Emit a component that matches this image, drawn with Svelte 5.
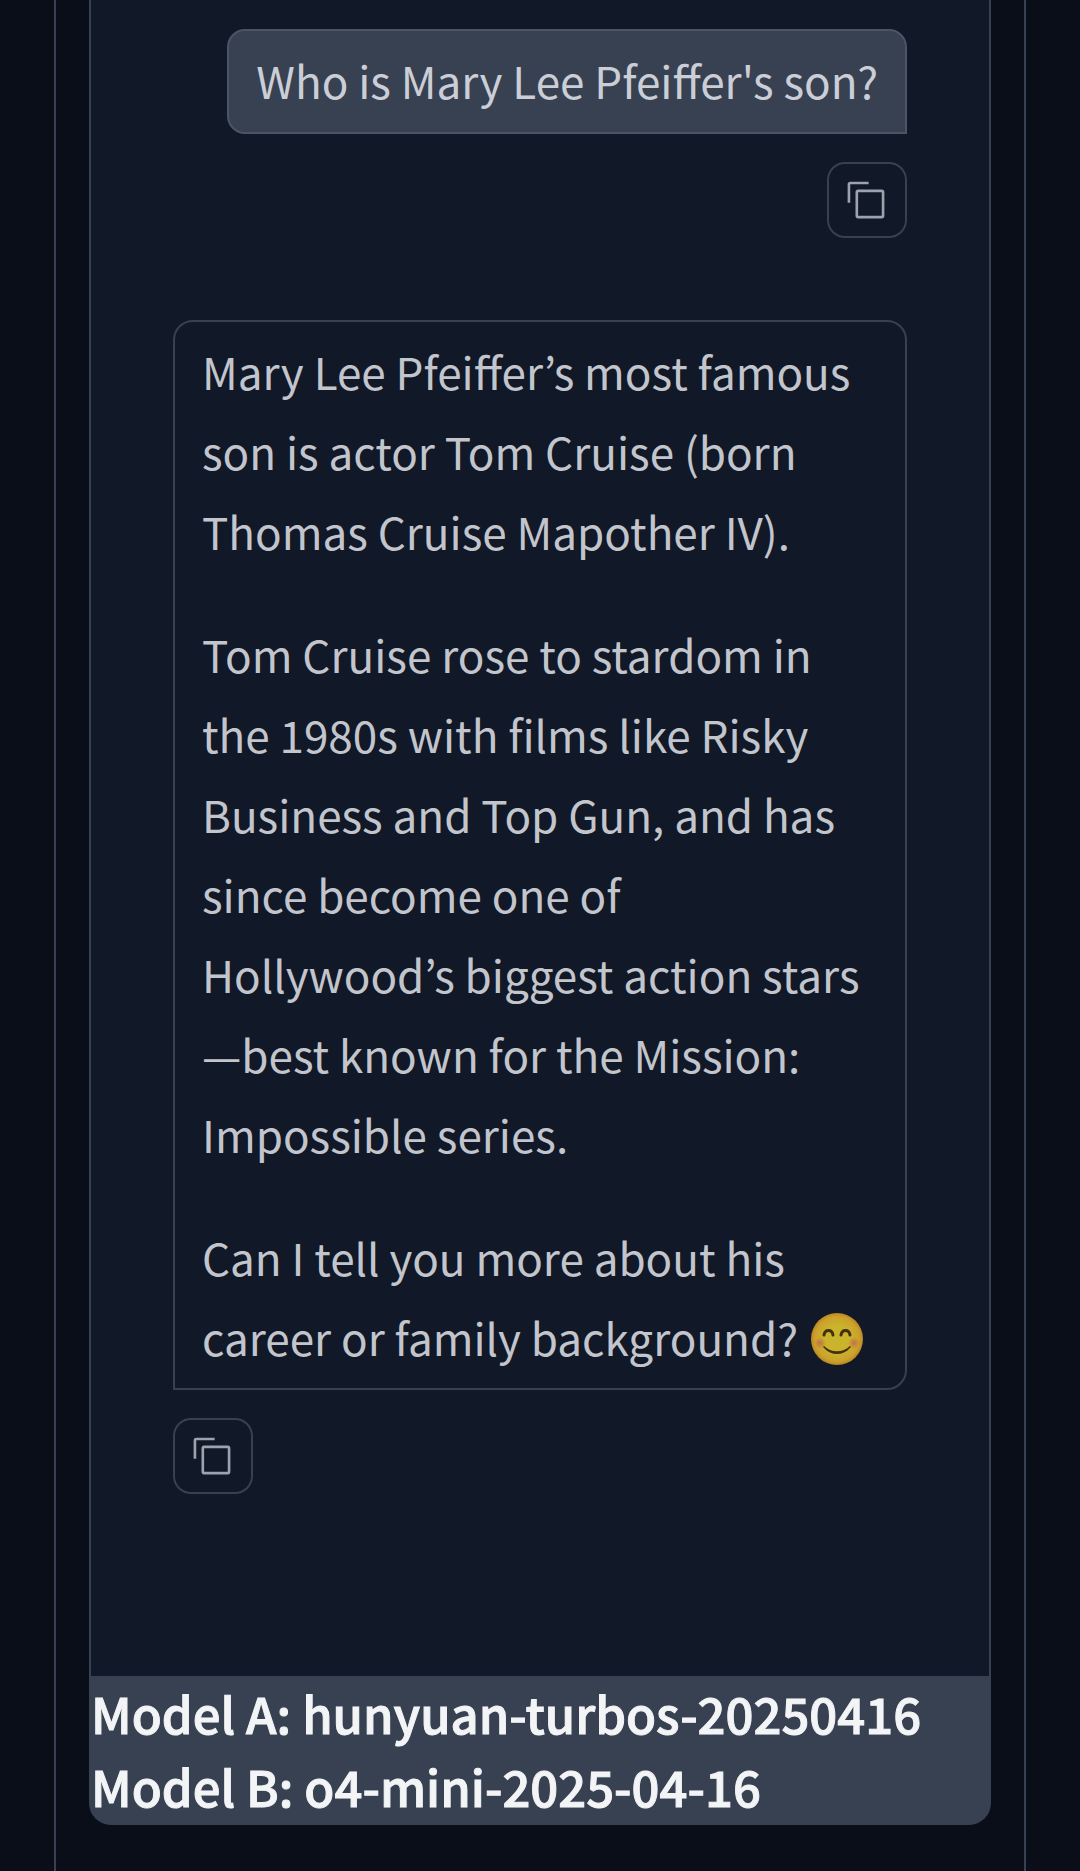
<script lang="ts">
  type Message = {
    role: "user" | "bot"
    paragraphs: string[]
    smile?: boolean
  }

  const messages: Message[] = [
    { role: "user", paragraphs: ["Who is Mary Lee Pfeiffer's son?"] },
    {
      role: "bot",
      paragraphs: [
        "Mary Lee Pfeiffer’s most famous son is actor Tom Cruise (born Thomas Cruise Mapother IV).",
        "Tom Cruise rose to stardom in the 1980s with films like Risky Business and Top Gun, and has since become one of Hollywood’s biggest action stars—best known for the Mission: Impossible series.",
        "Can I tell you more about his career or family background?",
      ],
      smile: true,
    },
  ]

  const models = [
    { label: "Model A", name: "hunyuan-turbos-20250416" },
    { label: "Model B", name: "o4-mini-2025-04-16" },
  ]

  function copy(message: Message) {
    navigator.clipboard?.writeText(message.paragraphs.join("\n\n"))
  }
</script>

<main>
  <div class="frame">
    <section class="chat">
      {#each messages as message}
        <article class="message {message.role}">
          <div class="bubble">
            {#each message.paragraphs as text, i}
              <p>
                {text}
                {#if message.smile && i === message.paragraphs.length - 1}
                  <svg class="smile" viewBox="0 0 54 54" role="img" aria-label="smiling face">
                    <defs>
                      <radialGradient id="face">
                        <stop offset="0.5" stop-color="#c9b42c" />
                        <stop offset="0.85" stop-color="#cba22b" />
                        <stop offset="1" stop-color="#bd8624" />
                      </radialGradient>
                      <radialGradient id="cheek">
                        <stop offset="0" stop-color="#c4704a" />
                        <stop offset="1" stop-color="#c4704a" stop-opacity="0" />
                      </radialGradient>
                    </defs>
                    <circle cx="27" cy="27" r="26" fill="url(#face)" />
                    <circle cx="10" cy="31" r="6" fill="url(#cheek)" />
                    <circle cx="44" cy="31" r="6" fill="url(#cheek)" />
                    <g fill="none" stroke="#44300c" stroke-linecap="round">
                      <path d="M14 23c1-6 8-6 9 0M31 23c1-6 8-6 9 0" stroke-width="3" />
                    </g>
                    <path d="M14 34c7 7 19 7 26 0 1 0 1 1 0 2-7 8-19 8-26 0-1-1-1-2 0-2z" fill="#44300c" />
                  </svg>
                {/if}
              </p>
            {/each}
          </div>
          <button type="button" aria-label="Copy message" onclick={() => copy(message)}>
            <svg viewBox="0 0 32 32" aria-hidden="true">
              <path d="M28 10v18H10V10h18m0-2H10a2 2 0 0 0-2 2v18a2 2 0 0 0 2 2h18a2 2 0 0 0 2-2V10a2 2 0 0 0-2-2Z" />
              <path d="M4 18H2V4a2 2 0 0 1 2-2h14v2H4Z" />
            </svg>
          </button>
        </article>
      {/each}
    </section>
    <footer>
      {#each models as model}
        <h3>{model.label}: {model.name}</h3>
      {/each}
    </footer>
  </div>
</main>

<style>
  :global(body) {
    background: #0a0e18;
  }

  main {
    padding: 0 54px;
    font-family: "Noto Sans CJK KR", "Noto Sans", sans-serif;
  }

  .frame {
    padding: 0 33px 46px;
    border: solid #374151;
    border-width: 0 2px;
  }

  .chat {
    display: flex;
    flex-direction: column;
    gap: 82px;
    padding: 29px 82px 182px;
    background: #111827;
    border: solid #374151;
    border-width: 0 2px;
  }

  .message {
    display: flex;
    flex-direction: column;
    align-items: flex-start;
    gap: 28px;
  }

  .user {
    align-items: flex-end;
  }

  .bubble {
    box-sizing: border-box;
    display: flex;
    flex-direction: column;
    gap: 43px;
    padding: 9px 27px 11px;
    border: 2px solid #374151;
    border-radius: 20px 20px 20px 0;
    color: #c3c5cc;
    font-size: 44px;
    line-height: 80px;
  }

  .user .bubble {
    padding-bottom: 12px;
    background: #374151;
    border-color: #4b5563;
    border-radius: 18px 18px 0 18px;
    color: #cbced6;
  }

  p,
  h3 {
    margin: 0;
  }

  .smile {
    width: 54px;
    height: 54px;
    margin-left: 2px;
    vertical-align: -10px;
  }

  button {
    display: flex;
    align-items: center;
    justify-content: center;
    width: 80px;
    height: 76px;
    padding: 0 2px 0 0;
    background: none;
    border: 2px solid #374151;
    border-radius: 18px;
    color: #9ca3af;
    cursor: pointer;
  }

  button svg {
    width: 42px;
    height: 42px;
    fill: currentColor;
  }

  footer {
    padding: 0 2px 3px;
    background: #374151;
    border-radius: 0 0 22px 22px;
    color: #f3f4f6;
  }

  /* medium plus a thin outline reads as semibold */
  h3 {
    font-size: 49px;
    font-weight: 500;
    line-height: 73px;
    -webkit-text-stroke: 1px currentColor;
  }
</style>
